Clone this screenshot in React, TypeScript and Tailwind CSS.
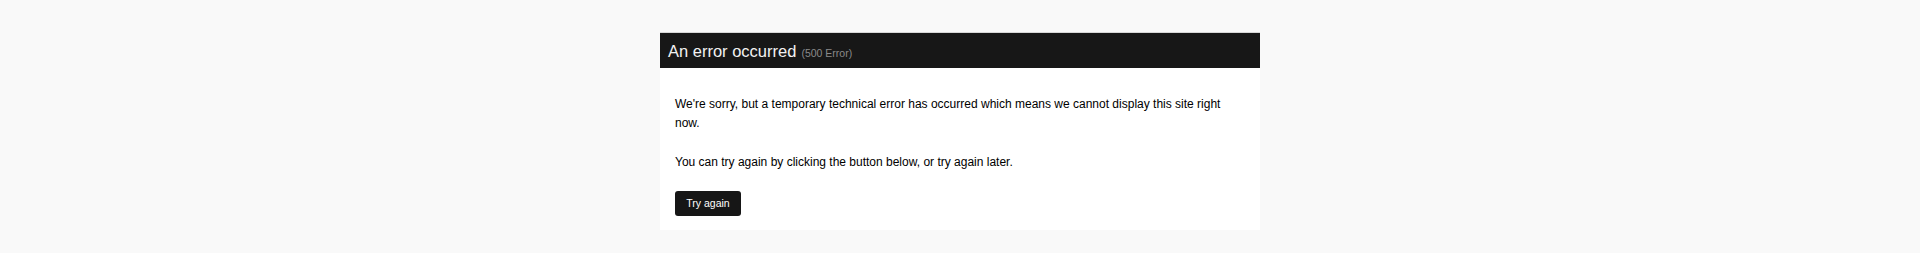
import React from "react";

export default function App() {
  return (
    <div className="min-h-[253px] w-full bg-[#f9f9f9] pt-[33px] font-['Liberation_Sans',Arial,sans-serif]">
      <div className="mx-auto w-[600px] bg-white">
        <div className="flex h-[35px] items-center bg-[#171717] px-[8px] pt-[1px] leading-[20px] shadow-[0_-1px_0_0_#d8d8d8]">
          <span className="text-[16.5px] text-[#f2f2f2]">An error occurred</span>
          <span className="ml-[5px] mt-[3px] text-[10.5px] text-[#8a8a8a]">(500 Error)</span>
        </div>
        <div className="px-[15px] pt-[27px] pb-[14px] text-[12px] leading-[19.2px] text-black">
          <p className="mb-[20px]">
            We're sorry, but a temporary technical error has occurred which means we cannot display this site right now.
          </p>
          <p className="mb-[18px]">You can try again by clicking the button below, or try again later.</p>
          <button className="flex h-[25px] w-[66px] items-center justify-center rounded-[3px] bg-[#161616] text-[10.5px] text-white">
            Try again
          </button>
        </div>
      </div>
    </div>
  );
}
